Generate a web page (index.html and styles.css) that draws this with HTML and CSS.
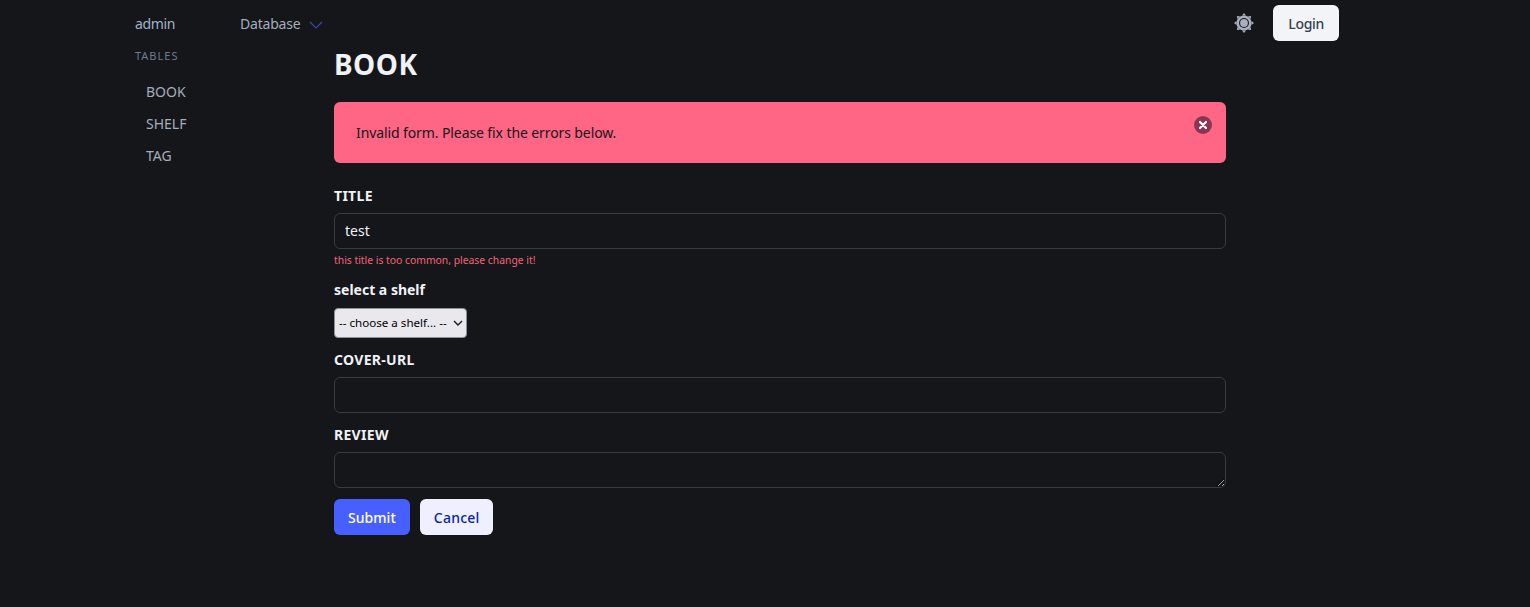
FILE: index.html
```html
<!DOCTYPE html>
<html lang="en">
<head>
    <meta charset="UTF-8">
    <title>BOOK</title>
    <link rel="stylesheet" href="styles.css">
</head>
<body>
    <header class="navbar">
        <a class="brand" href="#">admin</a>
        <div class="nav-menu">
            <span>Database</span>
            <svg class="chevron" viewBox="0 0 14 8" width="14" height="8" fill="none" stroke="currentColor" stroke-width="1.2"><path d="M1 1l6 6 6-6"/></svg>
        </div>
        <div class="nav-end">
            <svg class="sun" viewBox="0 0 20 20" width="20" height="20">
                <g fill="currentColor">
                    <path d="M8 2.5L10 0l2 2.5z"/>
                    <path d="M8 2.5L10 0l2 2.5z" transform="rotate(45 10 10)"/>
                    <path d="M8 2.5L10 0l2 2.5z" transform="rotate(90 10 10)"/>
                    <path d="M8 2.5L10 0l2 2.5z" transform="rotate(135 10 10)"/>
                    <path d="M8 2.5L10 0l2 2.5z" transform="rotate(180 10 10)"/>
                    <path d="M8 2.5L10 0l2 2.5z" transform="rotate(225 10 10)"/>
                    <path d="M8 2.5L10 0l2 2.5z" transform="rotate(270 10 10)"/>
                    <path d="M8 2.5L10 0l2 2.5z" transform="rotate(315 10 10)"/>
                    <circle cx="10" cy="10" r="7.6"/>
                </g>
                <circle cx="10" cy="10" r="5" fill="#14161a"/>
                <circle cx="10" cy="10" r="3.9" fill="currentColor"/>
            </svg>
            <button class="btn btn-login">Login</button>
        </div>
    </header>

    <div class="layout">
        <aside class="sidebar">
            <p class="menu-label">TABLES</p>
            <ul class="menu-list">
                <li><a href="#">BOOK</a></li>
                <li><a href="#">SHELF</a></li>
                <li><a href="#">TAG</a></li>
            </ul>
        </aside>

        <main class="content">
            <h1>BOOK</h1>

            <div class="alert">
                <span>Invalid form. Please fix the errors below.</span>
                <button class="alert-close" aria-label="close">
                    <svg viewBox="0 0 10 10" width="10" height="10" stroke="#fff" stroke-width="2.2" stroke-linecap="round"><path d="M2 2l6 6M8 2l-6 6"/></svg>
                </button>
            </div>

            <form>
                <div class="field field-title">
                    <label class="label-caps" for="title">TITLE</label>
                    <input type="text" id="title" value="test">
                    <p class="field-error">this title is too common, please change it!</p>
                </div>
                <div class="field">
                    <label class="label-shelf" for="shelf">select a shelf</label>
                    <div class="select-wrap">
                        <select id="shelf" class="native-select">
                            <option>-- choose a shelf... --</option>
                        </select>
                        <svg class="select-arrow" viewBox="0 0 10 6" width="10" height="6" fill="none" stroke="#1a1a1a" stroke-width="1.4"><path d="M1 1l4 4 4-4"/></svg>
                    </div>
                </div>
                <div class="field">
                    <label class="label-caps" for="cover">COVER-URL</label>
                    <input type="text" id="cover">
                </div>
                <div class="field">
                    <label class="label-caps" for="review">REVIEW</label>
                    <textarea id="review" rows="1"></textarea>
                </div>
                <div class="actions">
                    <button type="button" class="btn btn-submit">Submit</button>
                    <button type="button" class="btn btn-cancel">Cancel</button>
                </div>
            </form>
        </main>
    </div>
</body>
</html>
```

FILE: styles.css
```css
:root {
    --bg: #14161a;
    --text: #f0f2f5;
    --muted: #a6adbb;
    --border: #373b45;
    --danger: #ff6685;
}

* {
    box-sizing: border-box;
    font-family: "Noto Sans", "Open Sans", sans-serif;
}

html,
body {
    height: 100%;
}

body {
    margin: 0;
    background: var(--bg);
    color: var(--text);
    font-size: 14px;
    overflow: hidden;
}

a {
    text-decoration: none;
    color: inherit;
}

/* Navbar */
.navbar {
    display: flex;
    align-items: center;
    height: 46px;
    padding: 1px 191px 0 135px;
}

.brand {
    width: 105px;
    color: #a5b1cb;
    font-size: 14px;
    letter-spacing: -0.35px;
}

.nav-menu {
    display: flex;
    align-items: center;
    gap: 9px;
    color: #a6adbb;
    font-size: 14px;
    letter-spacing: -0.2px;
}

.chevron {
    color: #3a46a8;
    margin-top: 3px;
}

.nav-end {
    margin-left: auto;
    margin-top: -1px;
    display: flex;
    align-items: center;
    gap: 19px;
}

.sun {
    color: #a9afbd;
}

/* Buttons */
.btn {
    height: 36px;
    padding: 0 14px;
    border: 0;
    border-radius: 6px;
    font-size: 14px;
    font-weight: 500;
}

.btn-login {
    padding: 0 15px;
    background: #f2f4f7;
    color: #363e4f;
    letter-spacing: -0.3px;
}

.btn-submit {
    background: #485fff;
    color: #fff;
    letter-spacing: 0.05px;
}

.btn-cancel {
    background: #eff0fd;
    color: #0a1fa8;
    letter-spacing: 0.2px;
}

/* Layout */
.layout {
    display: flex;
    padding-left: 135px;
}

.sidebar {
    width: 199px;
}

.menu-label {
    margin: 3px 0 0;
    font-size: 11px;
    line-height: 13px;
    letter-spacing: 1px;
    color: #6f7a90;
}

.menu-list {
    list-style: none;
    margin: 14px 0 0;
    padding: 0 0 0 11px;
}

.menu-list li {
    height: 32px;
    line-height: 32px;
    font-size: 14px;
    color: #a6adbb;
}

.content {
    width: 892px;
}

h1 {
    margin: 0;
    font-size: 28px;
    line-height: 36px;
    font-weight: 700;
    letter-spacing: 0.5px;
}

/* Alert */
.alert {
    display: flex;
    justify-content: space-between;
    height: 61px;
    margin-top: 20px;
    padding: 13px 14px 0 22px;
    background: var(--danger);
    border-radius: 6px;
    color: #14161a;
    font-size: 14px;
    line-height: 35px;
    letter-spacing: -0.1px;
}

.alert-close {
    display: flex;
    align-items: center;
    justify-content: center;
    width: 18px;
    height: 18px;
    margin-top: 1px;
    padding: 0;
    border: 0;
    border-radius: 50%;
    background: #8a3650;
}

/* Form */
form {
    margin-top: 22px;
}

.field {
    margin-bottom: 11px;
}

.field-title {
    margin-bottom: 13px;
}

.field label {
    display: block;
    font-size: 14px;
    line-height: 22px;
    font-weight: 700;
    margin-bottom: 6px;
}

.field .label-caps {
    letter-spacing: 0.3px;
}

.field .label-shelf {
    margin-bottom: 7px;
}

input[type="text"],
textarea {
    display: block;
    width: 100%;
    height: 36px;
    padding: 0 10px 2px;
    background: var(--bg);
    border: 1px solid var(--border);
    border-radius: 6px;
    color: var(--text);
    font-size: 14px;
}

textarea {
    padding: 6px 10px;
}

.field-error {
    margin: 5px 0 0;
    font-size: 10.35px;
    line-height: 12px;
    color: #f4617a;
}

.select-wrap {
    position: relative;
    width: 133px;
}

.native-select {
    display: block;
    width: 133px;
    height: 30px;
    padding: 0 0 1px 4px;
    appearance: none;
    font-size: 11.6px;
    color: #000;
    background: #e9e9ed;
    border: 1px solid #8f8f9d;
    border-radius: 4px;
}

.select-arrow {
    position: absolute;
    top: 12px;
    right: 4px;
    pointer-events: none;
}

.actions {
    display: flex;
    gap: 10px;
    margin-top: 11px;
}
```
